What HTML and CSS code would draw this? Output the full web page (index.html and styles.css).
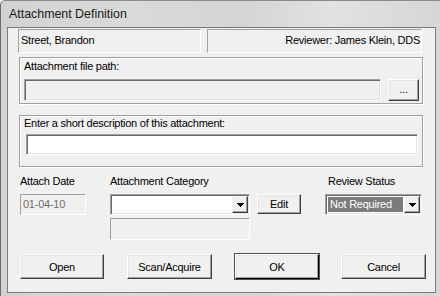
FILE: index.html
```html
<!DOCTYPE html>
<html>
<head>
<meta charset="utf-8">
<link rel="stylesheet" href="styles.css">
</head>
<body>
<div class="window">
  <div class="titlebar">Attachment Definition</div>
  <div class="client">
    <div class="row-top">
      <div class="static name">Street, Brandon</div>
      <div class="static reviewer">Reviewer: James Klein, DDS</div>
    </div>
    <div class="group g1">
      <div class="glabel">Attachment file path:</div>
      <div class="path-row">
        <div class="edit disabled path"></div>
        <div class="btn browse">...</div>
      </div>
    </div>
    <div class="group g2">
      <div class="glabel">Enter a short description of this attachment:</div>
      <div class="edit desc"></div>
    </div>
    <div class="fields">
      <div class="flabel">Attach Date</div>
      <div class="flabel">Attachment Category</div>
      <div></div>
      <div class="flabel status-label">Review Status</div>

      <div class="static date">01-04-10</div>
      <div class="combo category">
        <div class="combo-text"></div>
        <div class="drop"><svg width="7" height="4" shape-rendering="crispEdges"><rect x="0" y="0" width="7" height="1"/><rect x="1" y="1" width="5" height="1"/><rect x="2" y="2" width="3" height="1"/><rect x="3" y="3" width="1" height="1"/></svg></div>
      </div>
      <div class="btn edit-btn">Edit</div>
      <div class="combo status">
        <div class="combo-text"><span class="sel">Not Required</span></div>
        <div class="drop"><svg width="7" height="4" shape-rendering="crispEdges"><rect x="0" y="0" width="7" height="1"/><rect x="1" y="1" width="5" height="1"/><rect x="2" y="2" width="3" height="1"/><rect x="3" y="3" width="1" height="1"/></svg></div>
      </div>

      <div></div>
      <div class="static subcat"></div>
    </div>
    <div class="buttons">
      <div class="btn b-open">Open</div>
      <div class="btn b-scan">Scan/Acquire</div>
      <div class="btn b-ok">OK</div>
      <div class="btn b-cancel">Cancel</div>
    </div>
  </div>
</div>
</body>
</html>
```
FILE: styles.css
```css
* { box-sizing: border-box; }
html, body { margin: 0; padding: 0; }
body {
  width: 440px;
  height: 296px;
  overflow: hidden;
  font-family: "Liberation Sans", Arial, sans-serif;
  font-size: 11px;
  letter-spacing: -0.25px;
  color: #000;
}
.window {
  width: 440px;
  height: 296px;
  display: flex;
  flex-direction: column;
  padding: 0 4px 3px 7px;
  background: linear-gradient(90deg, #d2d2d2 0%, #dadada 30%, #d4d4d4 55%, #e2e2e2 75%, #d6d6d6 100%);
  border-left: 1px solid #6a6a6a;
  border-top: 1px solid #8a8a8a;
  border-top-left-radius: 5px;
  margin-left: 0;
}
.window { padding-left: 6px; }
.titlebar {
  height: 26px;
  flex: none;
  margin-left: -6px;
  padding-left: 8px;
  line-height: 26px;
  font-size: 12.4px;
  letter-spacing: 0;
  color: #1a1a1a;
}
.client {
  flex: 1;
  background: #f0f0f0;
  border: 1px solid #7a7a7a;
  display: flex;
  flex-direction: column;
}
.row-top {
  display: flex;
  gap: 6px;
  margin: 1px 0 0 10px;
  height: 24px;
}
.static {
  background: #f0f0f0;
  border: 1px solid;
  border-color: #a0a0a0 #fff #fff #a0a0a0;
  line-height: 21px;
  padding: 0 2px;
  white-space: nowrap;
}
.name { width: 183px; }
.reviewer { width: 215px; text-align: right; padding-right: 1px; }

.group {
  margin-left: 11px;
  width: 404px;
  border: 1px solid #a0a0a0;
  box-shadow: 1px 1px 0 #fff, inset 1px 1px 0 #fff;
}
.g1 { margin-top: 4px; height: 47px; padding: 2px 0 0 4px; }
.g2 { margin-top: 11px; height: 52px; padding: 1px 0 0 4px; }
.glabel { height: 13px; line-height: 13px; }
.path-row { display: flex; gap: 7px; margin-top: 6px; }
.edit {
  background: #fff;
  border: 1px solid;
  border-color: #a0a0a0 #fff #fff #a0a0a0;
  box-shadow: inset 1px 1px 0 #696969, inset -1px -1px 0 #e3e3e3;
}
.edit.disabled { background: #f0f0f0; }
.path { width: 357px; height: 22px; }
.desc { width: 392px; height: 21px; margin: 4px 0 0 2px; }

.btn {
  background: #f0f0f0;
  border: 1px solid;
  border-color: #fff #404040 #404040 #fff;
  box-shadow: inset -1px -1px 0 #a0a0a0, inset 1px 1px 0 #e3e3e3;
  display: flex;
  align-items: center;
  justify-content: center;
  white-space: nowrap;
}
.browse { width: 31px; height: 22px; padding-bottom: 2px; }

.fields {
  margin: 8px 0 0 12px;
  display: grid;
  grid-template-columns: 90px 147px 68px 97px;
  grid-template-rows: 13px 21px 22px;
  row-gap: 0;
}
.flabel { line-height: 13px; height: 13px; }
.status-label { padding-left: 3px; }
.date { margin-top: 6px; width: 66px; height: 21px; line-height: 19px; color: #6d6d6d; }
.fields > :nth-child(6), .fields > :nth-child(7), .fields > :nth-child(8) { margin-top: 6px; }
.fields > :nth-child(5) { margin-top: 6px; }
.fields { grid-template-rows: 13px 27px 25px; }
.combo {
  height: 21px;
  display: flex;
  background: #fff;
  border: 1px solid;
  border-color: #a0a0a0 #fff #fff #a0a0a0;
  box-shadow: inset 1px 1px 0 #696969, inset -1px -1px 0 #e3e3e3;
  padding: 1px;
}
.category { width: 140px; }
.status { width: 97px; }
.combo-text { flex: 1; padding: 1px; }
.sel {
  display: block;
  height: 15px;
  background: #7c7c7c;
  color: #fff;
  line-height: 15px;
  padding-left: 2px;
}
.drop {
  width: 16px;
  flex: none;
  background: #f0f0f0;
  border: 1px solid;
  border-color: #f8f8f8 #404040 #404040 #f8f8f8;
  box-shadow: inset -1px -1px 0 #a0a0a0;
  display: flex;
  align-items: center;
  justify-content: center;
}
.drop svg { display: block; fill: #000; margin-top: 1px; }
.edit-btn { width: 44px; height: 20px; }
.subcat { margin-top: 3px; width: 140px; height: 22px; }

.buttons {
  display: flex;
  margin: 14px 0 0 12px;
  height: 25px;
}
.buttons .btn { height: 25px; }
.b-open { width: 84px; }
.b-scan { width: 85px; margin-left: 23px; }
.b-ok { width: 84px; margin-left: 23px; border-color: #fff #000 #000 #fff; box-shadow: 0 0 0 0 transparent, inset -1px -1px 0 #a0a0a0, inset 1px 1px 0 #e3e3e3; outline: 1px solid #505050; outline-offset: 0; }
.b-cancel { width: 85px; margin-left: 22px; }
```
